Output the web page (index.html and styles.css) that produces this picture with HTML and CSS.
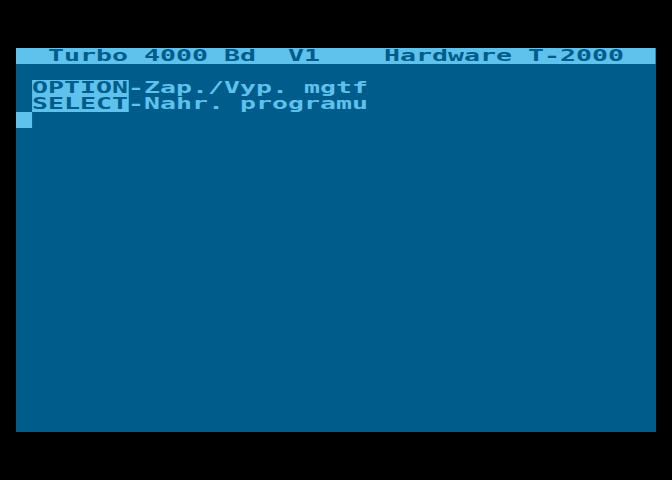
FILE: index.html
```html
<!DOCTYPE html>
<html>
<head>
<meta charset="utf-8">
<link rel="stylesheet" href="styles.css">
</head>
<body>
<div class="screen">
<div class="row bar">  Turbo 4000 Bd  V1    Hardware T-2000  </div>
<div class="row"> </div>
<div class="row"> <span class="inv">OPTION</span>-Zap./Vyp. mgtf</div>
<div class="row"> <span class="inv">SELECT</span>-Nahr. programu</div>
<div class="row"><span class="inv"> </span></div>
</div>
</body>
</html>
```
FILE: styles.css
```css
html, body {
  margin: 0;
  padding: 0;
  background: #000;
  width: 672px;
  height: 480px;
  overflow: hidden;
}
body {
  padding-top: 48px;
  padding-left: 16px;
  box-sizing: border-box;
}
.screen {
  width: 640px;
  height: 384px;
  background: #005c8a;
  color: #5ec2ec;
  font-family: "DejaVu Sans Mono", monospace;
  font-weight: bold;
  font-size: 16.5px;
  line-height: 16px;
}
.row {
  width: 40ch;
  height: 16px;
  white-space: pre;
  transform: scaleX(1.6107);
  transform-origin: 0 0;
}
.bar {
  background: #5ec2ec;
  color: #005c8a;
}
.inv {
  display: inline-block;
  vertical-align: top;
  height: 16px;
  background: #5ec2ec;
  color: #005c8a;
}
```
